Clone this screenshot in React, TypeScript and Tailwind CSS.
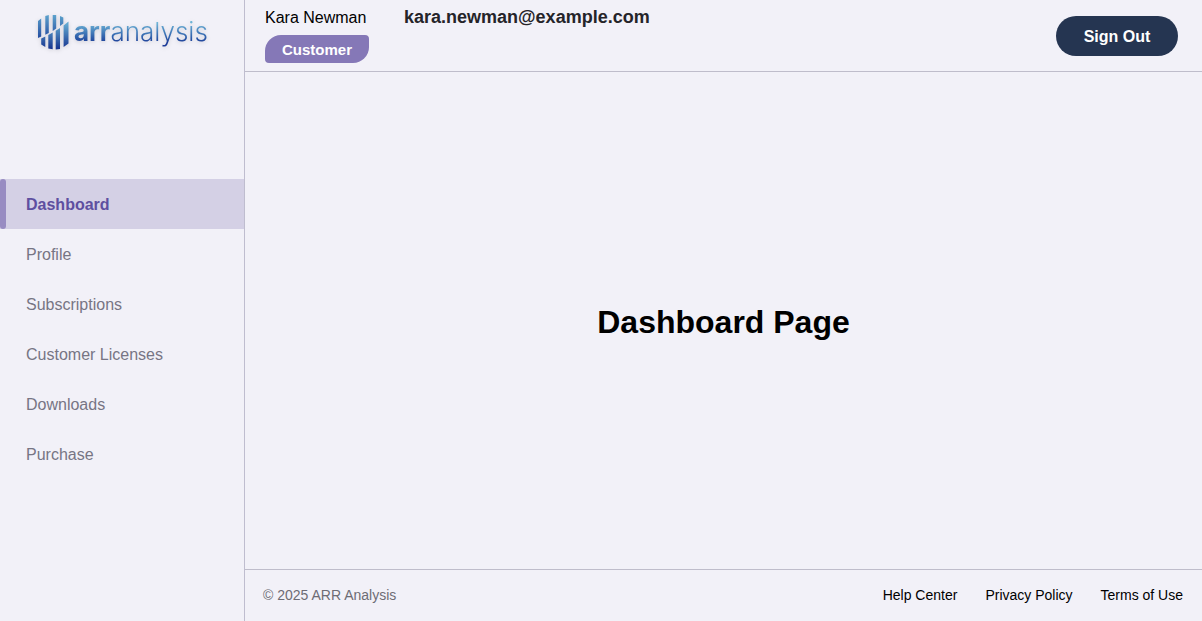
import { useId } from 'react';

const navItems = ['Dashboard', 'Profile', 'Subscriptions', 'Customer Licenses', 'Downloads', 'Purchase'];
const footerLinks = ['Help Center', 'Privacy Policy', 'Terms of Use'];

function LogoMark() {
  const id = useId();
  return (
    <svg width="32" height="36" viewBox="0 0 32 36" aria-hidden="true" className="shrink-0 drop-shadow-sm">
      <defs>
        <linearGradient id={id + 'a'} x1="0" y1="0" x2="0" y2="26" gradientUnits="userSpaceOnUse">
          <stop offset="0" stopColor="#5fa6cf" />
          <stop offset="1" stopColor="#1f459d" />
        </linearGradient>
        <linearGradient id={id + 'b'} x1="0" y1="10" x2="0" y2="35" gradientUnits="userSpaceOnUse">
          <stop offset="0" stopColor="#62a9d1" />
          <stop offset="1" stopColor="#16338f" />
        </linearGradient>
      </defs>
      <path
        fill={`url(#${id}a)`}
        d="M0 7 L3.200 4.500 V22.500 L0 24Z M7.300 2 L10.800 1 V19 L7.300 20.800Z M14.700 1 H18.200 V14.500 L14.700 17Z M22 2 L25.300 3.500 V9.500 L22 12Z"
      />
      <path
        fill={`url(#${id}b)`}
        d="M3.200 24.500 L7.300 22.500 V33 L3.200 30.500Z M10.300 21 L14.700 18.500 V35.300 L10.300 34.500Z M17.700 16.800 L22 14 V35 L17.700 35.500Z M25.600 11.500 L30.500 7.500 V29.500 L25.600 33Z"
      />
    </svg>
  );
}

function Logo() {
  return (
    <a href="#home" aria-label="arranalysis" className="flex items-center gap-1 pl-[38px] pt-3.5 font-['Inter',sans-serif]">
      <LogoMark />
      <span className="bg-linear-to-b from-[#6fb4d6] from-25% to-[#1d3c98] to-80% bg-clip-text text-[26px] leading-9 font-light text-transparent drop-shadow-sm">
        <b className="font-bold">arr</b>analysis
      </span>
    </a>
  );
}

export default function App() {
  return (
    <div className="flex min-h-screen bg-[#f2f1f8] font-['Liberation_Sans',sans-serif] text-black">
      <aside className="flex w-[245px] shrink-0 flex-col gap-[129px] border-r border-[#bfbdcf]">
        <Logo />
        <nav className="flex flex-col">
          {navItems.map((item, i) => (
            <a
              key={item}
              href={'#' + item.toLowerCase().replace(' ', '-')}
              aria-current={i === 0 ? 'page' : undefined}
              className={
                i === 0
                  ? 'flex h-[50px] items-center gap-5 bg-[#d4d0e5] text-base font-bold text-[#5e4fa0]'
                  : 'flex h-[50px] items-center pl-[26px] text-base text-[#777584]'
              }
            >
              {i === 0 && <span className="h-full w-1.5 rounded-[3px] bg-[#988cc2]" />}
              <span className="pt-0.5">{item}</span>
            </a>
          ))}
        </nav>
      </aside>
      <div className="flex min-w-0 grow flex-col">
        <header className="flex h-[72px] items-start justify-between border-b border-[#bfbdcb] pr-6 pl-5">
          <div className="flex gap-[35px]">
            <div className="flex flex-col items-start">
              <span className="h-[35px] pt-1.5 text-base leading-6">Kara Newman</span>
              <span className="flex h-7 min-w-[104px] items-center justify-center rounded-tl-2xl rounded-tr-sm rounded-br-2xl rounded-bl-sm bg-[#8578b7] px-4 pt-0.5 text-[15px] font-bold text-white">
                Customer
              </span>
            </div>
            <span className="pt-[5px] text-lg leading-6 font-bold text-[#252429]">kara.newman@example.com</span>
          </div>
          <button type="button" className="mt-4 h-10 w-[122px] rounded-full bg-[#253551] pt-0.5 text-base font-bold text-white">
            Sign Out
          </button>
        </header>
        <main className="flex grow items-center justify-center pt-0.5">
          <h1 className="text-[32px] leading-10 font-bold">Dashboard Page</h1>
        </main>
        <footer className="flex h-[52px] items-center justify-between border-t border-[#bfbdcb] pr-[19px] pb-0.5 pl-[18px] text-sm">
          <span className="text-[#6d6c74]">© 2025 ARR Analysis</span>
          <nav className="flex gap-7">
            {footerLinks.map((link) => (
              <a key={link} href={'#' + link.toLowerCase().replaceAll(' ', '-')}>
                {link}
              </a>
            ))}
          </nav>
        </footer>
      </div>
    </div>
  );
}
